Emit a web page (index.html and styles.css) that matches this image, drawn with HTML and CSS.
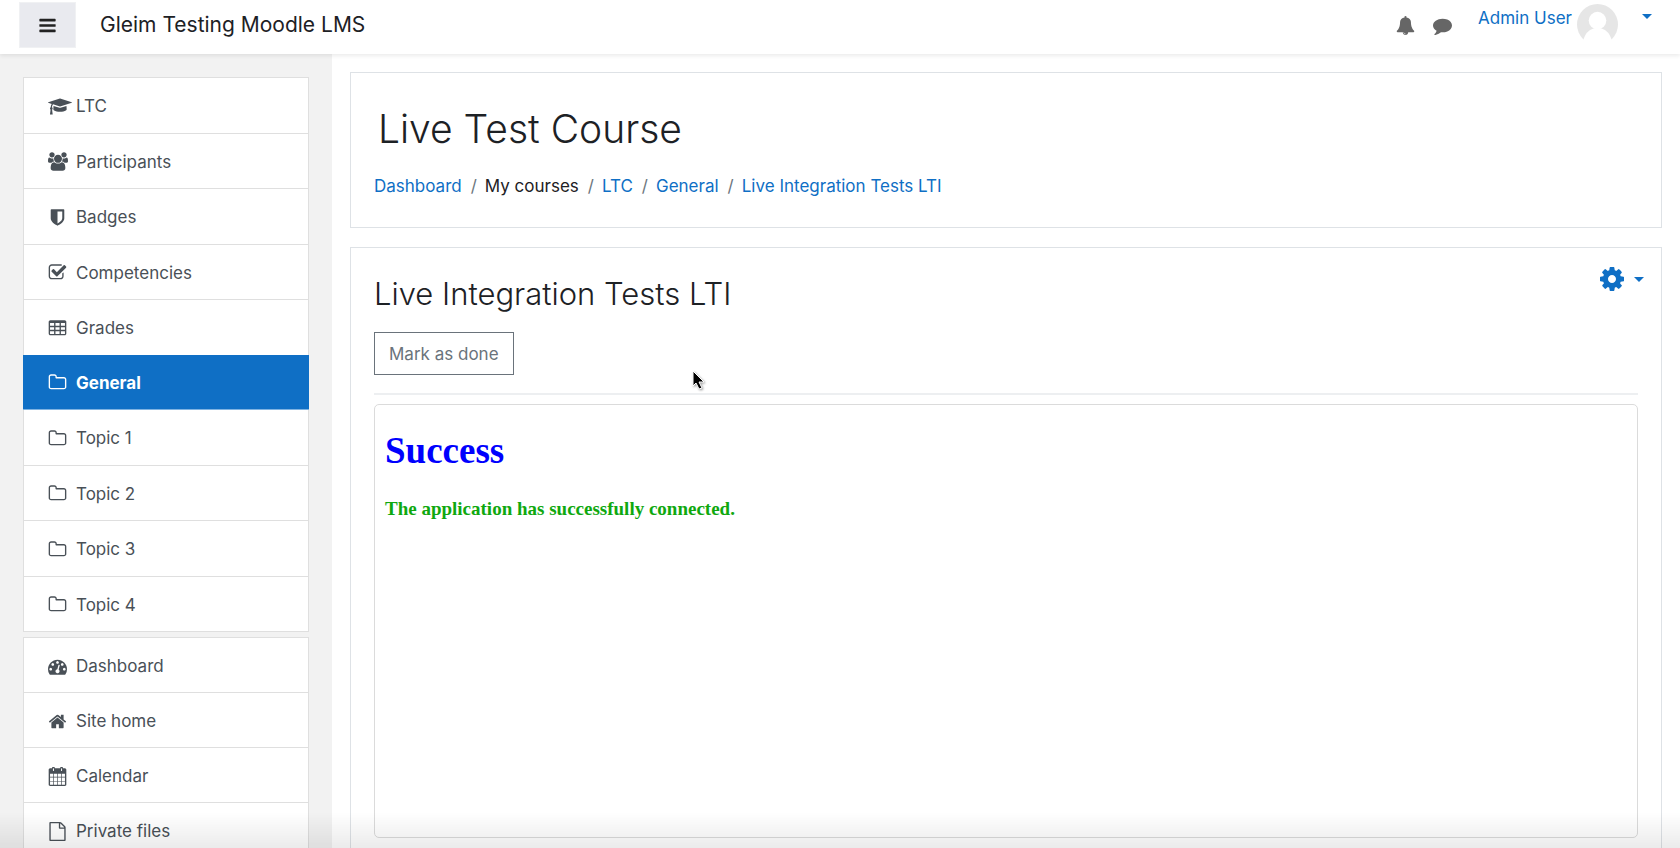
FILE: index.html
```html
<!DOCTYPE html>
<html lang="en">
  <head>
    <meta charset="UTF-8" />
    <meta name="viewport" content="width=device-width, initial-scale=1.0" />
    <title>Live Integration Tests LTI</title>
    <link rel="stylesheet" href="styles.css">
  </head>
  <body>
    <svg class="sprite" aria-hidden="true">
      <symbol id="i-bars" viewBox="0 0 1792 1792">
        <path d="M1664 1344v128q0 26-19 45t-45 19h-1408q-26 0-45-19t-19-45v-128q0-26 19-45t45-19h1408q26 0 45 19t19 45zm0-512v128q0 26-19 45t-45 19h-1408q-26 0-45-19t-19-45v-128q0-26 19-45t45-19h1408q26 0 45 19t19 45zm0-512v128q0 26-19 45t-45 19h-1408q-26 0-45-19t-19-45v-128q0-26 19-45t45-19h1408q26 0 45 19t19 45z" />
      </symbol>
      <symbol id="i-bell" viewBox="0 0 1792 1792">
        <path d="M912 1696q0-16-16-16-59 0-101.5-42.5t-42.5-101.5q0-16-16-16t-16 16q0 73 51.5 124.5t124.5 51.5q16 0 16-16zm816-288q0 52-38 90t-90 38h-448q0 106-75 181t-181 75-181-75-75-181h-448q-52 0-90-38t-38-90q50-42 91-88t85-119.5 74.5-158.5 50-206 19.5-260q0-152 117-282.5t307-158.5q-8-19-8-39 0-40 28-68t68-28 68 28 28 68q0 20-8 39 190 28 307 158.5t117 282.5q0 139 19.5 260t50 206 74.5 158.5 85 119.5 91 88z" />
      </symbol>
      <symbol id="i-comment" viewBox="0 0 1792 1792">
        <path d="M1792 896q0 174-120 321.5t-326 233-450 85.5q-70 0-145-8-198 175-460 242-49 14-114 22-17 2-30.5-9t-17.5-29v-1q-3-4-.5-12t2-10 4.5-9.5l6-9 7-8.5 8-9q7-8 31-34.5t34.5-38 31-39.5 32.5-51 27-59 26-76q-157-89-247.5-220t-90.5-281q0-130 71-248.5t191-204.5 286-136.5 348-50.5q244 0 450 85.5t326 233 120 321.5z" />
      </symbol>
      <symbol id="i-cap" viewBox="0 0 2304 1792">
        <path d="M1774 836l18 316q4 69-82 128t-235 93.5-323 34.5-323-34.5-235-93.5-82-128l18-316 574 181q22 7 48 7t48-7zm530-324q0 23-22 31l-1120 352q-4 1-10 1t-10-1l-652-206q-43 34-71 111.5t-34 178.5q63 36 63 109 0 69-58 107l58 433q2 14-8 25-9 11-24 11h-192q-15 0-24-11-10-11-8-25l58-433q-58-38-58-107 0-73 65-111 11-207 98-330l-333-104q-22-8-22-31t22-31l1120-352q4-1 10-1t10 1l1120 352q22 8 22 31z" />
      </symbol>
      <symbol id="i-users" viewBox="0 0 1920 1792">
        <path d="M593 896q-162 5-265 128h-134q-82 0-138-40.5t-56-118.5q0-353 124-353 6 0 43.5 21t97.5 42.5 119 21.5q67 0 133-23-5 37-5 66 0 139 81 256zm1071 637q0 120-73 189.5t-194 69.5h-874q-121 0-194-69.5t-73-189.5q0-53 3.5-103.5t14-109 26.5-108.5 43-97.5 62-81 85.5-53.5 111.5-20q10 0 43 21.5t73 48 107 48 135 21.5 135-21.5 107-48 73-48 43-21.5q61 0 111.5 20t85.5 53.5 62 81 43 97.5 26.5 108.5 14 109 3.5 103.5zm-1024-1277q0 106-75 181t-181 75-181-75-75-181 75-181 181-75 181 75 75 181zm704 384q0 159-112.5 271.5t-271.5 112.5-271.5-112.5-112.5-271.5 112.5-271.5 271.5-112.5 271.5 112.5 112.5 271.5zm576 225q0 78-56 118.5t-138 40.5h-134q-103-123-265-128 81-117 81-256 0-29-5-66 66 23 133 23 59 0 119-21.5t97.5-42.5 43.5-21q124 0 124 353zm-128-609q0 106-75 181t-181 75-181-75-75-181 75-181 181-75 181 75 75 181z" />
      </symbol>
      <symbol id="i-shield" viewBox="0 0 1792 1792">
        <path d="M1344 960v-640h-448v1137q119-63 213-137 235-184 235-360zm192-768v768q0 86-33.5 170.5t-83 150-118 127.5-126.5 103-121 77.5-89.5 49.5-42.5 20q-12 6-26 6t-26-6q-16-7-42.5-20t-89.5-49.5-121-77.5-126.5-103-118-127.5-83-150-33.5-170.5v-768q0-26 19-45t45-19h1152q26 0 45 19t19 45z" />
      </symbol>
      <symbol id="i-check" viewBox="0 0 1792 1792">
        <path d="M1472 930v318q0 119-84.5 203.5t-203.5 84.5h-832q-119 0-203.5-84.5t-84.5-203.5v-832q0-119 84.5-203.5t203.5-84.5h832q63 0 117 25 15 7 18 23 3 17-9 29l-49 49q-10 10-23 10-3 0-9-2-23-6-45-6h-832q-66 0-113 47t-47 113v832q0 66 47 113t113 47h832q66 0 113-47t47-113v-254q0-13 9-22l64-64q10-10 23-10 6 0 12 3 20 8 20 29zm231-489l-814 814q-24 24-57 24t-57-24l-430-430q-24-24-24-57t24-57l110-110q24-24 57-24t57 24l263 263 647-647q24-24 57-24t57 24l110 110q24 24 24 57t-24 57z" />
      </symbol>
      <symbol id="i-table" viewBox="0 0 1792 1792">
        <path fill-rule="evenodd" d="M224 128h1344q66 0 113 47t47 113v1088q0 66-47 113t-113 47h-1344q-66 0-113-47t-47-113v-1088q0-66 47-113t113-47zM192 384v256h384v-256zM704 384v256h384v-256zM1216 384v256h384v-256zM192 768v256h384v-256zM704 768v256h384v-256zM1216 768v256h384v-256zM192 1152v256h384v-256zM704 1152v256h384v-256zM1216 1152v256h384v-256z" />
      </symbol>
      <symbol id="i-folder" viewBox="0 0 1792 1792">
        <path d="M1600 1312v-704q0-40-28-68t-68-28h-704q-40 0-68-28t-28-68v-64q0-40-28-68t-68-28h-320q-40 0-68 28t-28 68v960q0 40 28 68t68 28h1216q40 0 68-28t28-68zm128-704v704q0 92-66 158t-158 66h-1216q-92 0-158-66t-66-158v-960q0-92 66-158t158-66h320q92 0 158 66t66 158v32h672q92 0 158 66t66 158z" />
      </symbol>
      <symbol id="i-dashboard" viewBox="0 0 1792 1792">
        <path d="M384 1152q0-53-37.5-90.5t-90.5-37.5-90.5 37.5-37.5 90.5 37.5 90.5 90.5 37.5 90.5-37.5 37.5-90.5zm192-448q0-53-37.5-90.5t-90.5-37.5-90.5 37.5-37.5 90.5 37.5 90.5 90.5 37.5 90.5-37.5 37.5-90.5zm428 481l101-382q6-26-7.5-48.5t-38.5-29.5-48 6.5-30 39.5l-101 382q-60 5-107 43.5t-63 98.5q-20 77 20 146t117 89 146-20 89-117q16-60-6-117t-72-91zm660-33q0-53-37.5-90.5t-90.5-37.5-90.5 37.5-37.5 90.5 37.5 90.5 90.5 37.5 90.5-37.5 37.5-90.5zm-640-640q0-53-37.5-90.5t-90.5-37.5-90.5 37.5-37.5 90.5 37.5 90.5 90.5 37.5 90.5-37.5 37.5-90.5zm448 192q0-53-37.5-90.5t-90.5-37.5-90.5 37.5-37.5 90.5 37.5 90.5 90.5 37.5 90.5-37.5 37.5-90.5zm320 448q0 261-141 483-19 29-54 29h-1402q-35 0-54-29-141-221-141-483 0-182 71-348t191-286 286-191 348-71 348 71 286 191 191 286 71 348z" />
      </symbol>
      <symbol id="i-home" viewBox="0 0 1792 1792">
        <path d="M1472 992v480q0 26-19 45t-45 19h-384v-384h-256v384h-384q-26 0-45-19t-19-45v-480q0-1 .5-3t.5-3l575-474 575 474q1 2 1 6zm223-69l-62 74q-8 9-21 11h-3q-13 0-21-7l-692-577-692 577q-12 8-24 7-13-2-21-11l-62-74q-8-10-7-23.5t11-21.5l719-599q32-26 76-26t76 26l244 204v-195q0-14 9-23t23-9h192q14 0 23 9t9 23v408l219 182q10 8 11 21.5t-7 23.5z" />
      </symbol>
      <symbol id="i-calendar" viewBox="0 0 1792 1792">
        <path fill-rule="evenodd" d="M192 128h1408q52 0 90 38t38 90v1408q0 52-38 90t-90 38h-1408q-52 0-90-38t-38-90v-1408q0-52 38-90t90-38zM192 640v288h288v-288zM544 640v288h320v-288zM928 640v288h320v-288zM1312 640v288h288v-288zM192 992v320h288v-320zM544 992v320h320v-320zM928 992v320h320v-320zM1312 992v320h288v-320zM192 1376v288h288v-288zM544 1376v288h320v-288zM928 1376v288h320v-288zM1312 1376v288h288v-288z" />
        <path class="calendar-ring" d="M512 96v288M1280 96v288" />
        <path class="calendar-slot" d="M512 160v160M1280 160v160" />
      </symbol>
      <symbol id="i-file" viewBox="0 0 1792 1792">
        <path d="M1596 380q28 28 48 76t20 88v1152q0 40-28 68t-68 28h-1344q-40 0-68-28t-28-68v-1600q0-40 28-68t68-28h896q40 0 88 20t76 48zm-444-244v376h376q-10-29-22-41l-313-313q-12-12-41-22zm384 1528v-1024h-416q-40 0-68-28t-28-68v-416h-768v1536h1280z" />
      </symbol>
      <symbol id="i-cog" viewBox="0 0 1792 1792">
        <path d="M1152 896q0-106-75-181t-181-75-181 75-75 181 75 181 181 75 181-75 75-181zm512-109v222q0 12-8 23t-20 13l-185 28q-19 54-39 91 35 50 107 138 10 12 10 25t-9 23q-27 37-99 108t-94 71q-12 0-26-9l-138-108q-44 23-91 38-16 136-29 186-7 28-36 28h-222q-14 0-24.5-8.5t-11.5-21.5l-28-184q-49-16-90-37l-141 107q-10 9-25 9-14 0-25-11-126-114-165-168-7-10-7-23 0-12 8-23 15-21 51-66.5t54-70.5q-27-50-41-99l-183-27q-13-2-21-12.5t-8-23.5v-222q0-12 8-23t19-13l186-28q14-46 39-92-40-57-107-138-10-12-10-24 0-10 9-23 26-36 98.5-107.5t94.5-71.5q13 0 26 10l138 107q44-23 91-38 16-136 29-186 7-28 36-28h222q14 0 24.5 8.5t11.5 21.5l28 184q49 16 90 37l142-107q9-9 24-9 13 0 25 10 129 119 165 170 7 8 7 22 0 12-8 23-15 21-51 66.5t-54 70.5q26 50 41 98l183 28q13 2 21 12.5t8 23.5z" />
      </symbol>
    </svg>

    <header class="navbar">
      <button type="button" class="drawer-toggle" aria-label="Side panel">
        <svg class="icon"><use href="#i-bars" /></svg>
      </button>
      <a href="#" class="brand">Gleim Testing Moodle LMS</a>
      <div class="nav-icons">
        <button type="button" class="icon-button" aria-label="Notifications">
          <svg class="icon"><use href="#i-bell" /></svg>
        </button>
        <button type="button" class="icon-button" aria-label="Messages">
          <svg class="icon"><use href="#i-comment" /></svg>
        </button>
      </div>
      <a href="#" class="user-menu">
        <span class="user-name">Admin User</span>
        <svg class="avatar" viewBox="0 0 42 42">
          <circle cx="21" cy="21" r="21" fill="#e6e6e6" />
          <circle cx="21" cy="17" r="9" fill="#fff" />
          <path d="M6 38q3-11 11-13h8q8 2 11 13l-7 5h-16z" fill="#fff" />
        </svg>
        <span class="caret"></span>
      </a>
    </header>

    <div class="page">
      <nav class="drawer">
        <ul class="list-group course-nav">
          <li><a href="#"><svg class="icon icon-cap"><use href="#i-cap" /></svg>LTC</a></li>
          <li><a href="#"><svg class="icon icon-users"><use href="#i-users" /></svg>Participants</a></li>
          <li><a href="#"><svg class="icon"><use href="#i-shield" /></svg>Badges</a></li>
          <li><a href="#"><svg class="icon"><use href="#i-check" /></svg>Competencies</a></li>
          <li><a href="#"><svg class="icon"><use href="#i-table" /></svg>Grades</a></li>
          <li class="active"><a href="#"><svg class="icon"><use href="#i-folder" /></svg>General</a></li>
          <li><a href="#"><svg class="icon"><use href="#i-folder" /></svg>Topic 1</a></li>
          <li><a href="#"><svg class="icon"><use href="#i-folder" /></svg>Topic 2</a></li>
          <li><a href="#"><svg class="icon"><use href="#i-folder" /></svg>Topic 3</a></li>
          <li><a href="#"><svg class="icon"><use href="#i-folder" /></svg>Topic 4</a></li>
        </ul>
        <ul class="list-group">
          <li><a href="#"><svg class="icon"><use href="#i-dashboard" /></svg>Dashboard</a></li>
          <li><a href="#"><svg class="icon"><use href="#i-home" /></svg>Site home</a></li>
          <li><a href="#"><svg class="icon"><use href="#i-calendar" /></svg>Calendar</a></li>
          <li><a href="#"><svg class="icon"><use href="#i-file" /></svg>Private files</a></li>
        </ul>
      </nav>

      <main class="content">
        <section class="card course-header">
          <h1>Live Test Course</h1>
          <ol class="breadcrumb">
            <li><a href="#">Dashboard</a></li>
            <li>My courses</li>
            <li><a href="#">LTC</a></li>
            <li><a href="#">General</a></li>
            <li><a href="#">Live Integration Tests LTI</a></li>
          </ol>
        </section>

        <section class="card activity">
          <div class="activity-header">
            <h2>Live Integration Tests LTI</h2>
            <button type="button" class="settings" aria-label="Actions menu">
              <svg class="icon"><use href="#i-cog" /></svg>
              <span class="caret"></span>
            </button>
          </div>
          <button type="button" class="btn-outline">Mark as done</button>
          <hr />
          <div class="tool-frame">
            <h1>Success</h1>
            <p>The application has successfully connected.</p>
          </div>
        </section>
      </main>
    </div>

    <div class="bottom-shade"></div>
    <svg class="cursor" viewBox="0 0 14 20" aria-hidden="true">
      <path d="M1 1v15l3-3 3 6 3-1-3-6h5z" fill="#000" stroke="#fff" />
    </svg>
  </body>
</html>
```

FILE: styles.css
```css
* {
  box-sizing: border-box;
}

body {
  margin: 0;
  height: 100vh;
  display: flex;
  flex-direction: column;
  overflow: hidden;
  font-family: "Inter", sans-serif;
  font-size: 17px;
  line-height: 24px;
  color: #1d2125;
  background: #fff;
}

a {
  color: #0f6fc5;
  text-decoration: none;
}

button {
  font: inherit;
  cursor: pointer;
}

ul,
ol {
  list-style: none;
  margin: 0;
  padding: 0;
}

.sprite {
  position: absolute;
  width: 0;
  height: 0;
}

.icon {
  width: 19px;
  height: 19px;
  flex: none;
  fill: currentColor;
}

.caret {
  border: 5px solid transparent;
  border-top-color: #0f6fc5;
  border-bottom: 0;
}

/* top bar */
.navbar {
  flex: none;
  display: flex;
  height: 54px;
  padding: 2px 28px 0 19px;
  background: #fff;
  box-shadow: 0 2px 4px rgba(0, 0, 0, 0.08);
  z-index: 2;
}

.drawer-toggle {
  width: 57px;
  height: 46px;
  padding: 0;
  display: flex;
  align-items: center;
  justify-content: center;
  border: 1px solid #f0f1f3;
  background: #e9eaef;
  color: #222;
}

.brand {
  margin-left: 24px;
  font-size: 21px;
  line-height: 46px;
  color: #1d2125;
}

.nav-icons {
  display: flex;
  gap: 18px;
  height: 46px;
  margin-left: auto;
}

.icon-button {
  display: flex;
  align-items: center;
  padding: 0;
  border: 0;
  background: none;
  color: #666;
}

.user-menu {
  display: flex;
  margin-left: 26px;
  padding-top: 2px;
}

.user-name {
  line-height: 28px;
}

.avatar {
  width: 41px;
  height: 41px;
  margin-left: 5px;
}

.user-menu .caret {
  align-self: flex-start;
  margin: 10px 0 0 24px;
}

/* side drawer */
.page {
  flex: 1;
  min-height: 0;
  display: flex;
}

.drawer {
  flex: none;
  width: 332px;
  padding: 23px 23px 0;
  overflow: hidden;
  background: #f2f2f2;
}

.list-group {
  display: flex;
  flex-direction: column;
  margin-bottom: 5px;
  border: 1px solid #dfdfdf;
  border-bottom: 0;
  background: #fff;
}

.list-group li {
  flex: 1;
  display: flex;
  border-bottom: 1px solid #dfdfdf;
}

.list-group a {
  flex: 1;
  display: flex;
  align-items: center;
  padding: 16px 24px 14px;
  color: #495057;
}

.course-nav {
  min-height: 555px;
}

.list-group .icon {
  margin-right: 9px;
}

.list-group .icon-cap {
  width: 24px;
  margin-right: 4px;
}

.list-group .icon-users {
  width: 20px;
  margin-right: 8px;
}

.calendar-ring,
.calendar-slot {
  fill: none;
  stroke: currentColor;
  stroke-width: 256;
  stroke-linecap: round;
}

.calendar-slot {
  stroke: #fff;
  stroke-width: 96;
}

.list-group .active {
  margin: -1px -1px 0;
  padding: 0 1px;
  border-color: #7fb3e2;
  background: #0f6fc5;
}

.active a {
  color: #fff;
  font-weight: 700;
}

/* main column */
.content {
  flex: 1;
  display: flex;
  flex-direction: column;
  gap: 19px;
  padding: 18px 18px 0;
  overflow: hidden;
}

.card {
  flex: none;
  padding: 24px 23px;
  border: 1px solid #dee2e6;
}

.course-header {
  min-height: 156px;
}

h1,
h2 {
  margin: 0;
  font-weight: 300;
}

.course-header h1 {
  margin-left: 4px;
  font-size: 39px;
  line-height: 64px;
}

.breadcrumb {
  display: flex;
  margin-top: 13px;
}

.breadcrumb li + li::before {
  content: "/";
  padding: 0 8px 0 9px;
  color: #6c757d;
}

.activity-header {
  display: flex;
  justify-content: space-between;
  align-items: flex-start;
}

h2 {
  font-size: 31px;
  line-height: 44px;
}

.settings {
  display: flex;
  align-items: center;
  gap: 8px;
  margin-right: -6px;
  margin-top: -7px;
  padding: 0;
  border: 0;
  background: none;
  color: #0f6fc5;
}

.settings .icon {
  width: 28px;
  height: 28px;
}

.btn-outline {
  height: 43px;
  margin-top: 16px;
  padding: 0 14px;
  border: 1px solid #6a737b;
  background: #fff;
  color: #6a737b;
}

hr {
  margin: 18px 0 9px;
  border: 0;
  border-top: 2px solid #edeff1;
}

.tool-frame {
  min-height: 434px;
  padding: 24px 10px;
  border: 1px solid #dbdbdb;
  border-radius: 5px;
  font-family: "Liberation Serif", serif;
  font-weight: 700;
}

.tool-frame h1 {
  font-size: 37px;
  line-height: 44px;
  font-weight: 700;
  color: #0000fe;
}

.tool-frame p {
  margin: 24px 0 0;
  font-size: 19px;
  color: #0fa80f;
}

/* fade over the lower edge and the pointer on top */
.bottom-shade {
  position: fixed;
  inset: auto 0 0 0;
  height: 36px;
  background: linear-gradient(transparent, rgba(0, 0, 0, 0.08));
  pointer-events: none;
  z-index: 3;
}

.cursor {
  position: fixed;
  left: 692px;
  top: 370px;
  width: 14px;
  height: 20px;
  filter: drop-shadow(1px 1px 1px rgba(0, 0, 0, 0.4));
  z-index: 4;
}
```
